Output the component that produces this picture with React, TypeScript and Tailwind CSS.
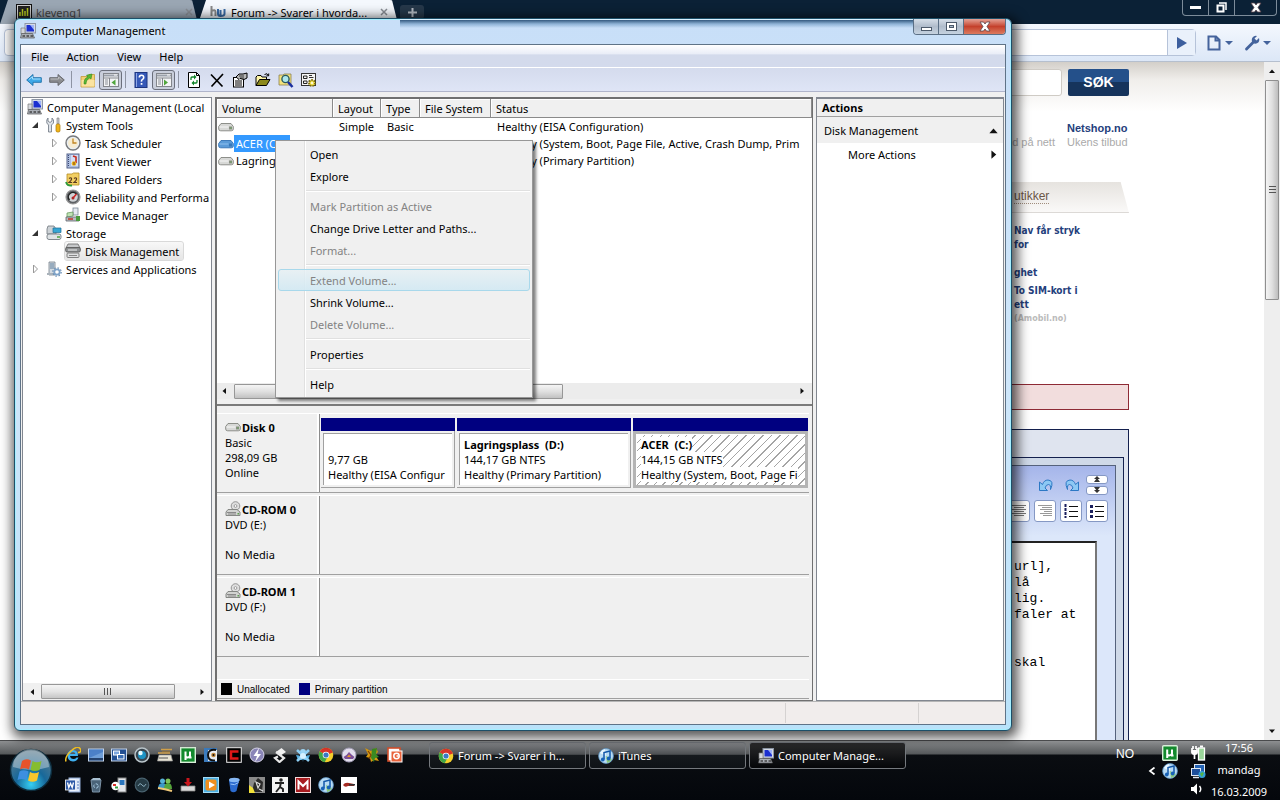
import type { ReactNode } from 'react';
import { clsx } from 'clsx';

type IconProps = { children: ReactNode; size?: number };

function Icon({ children, size = 16 }: IconProps) {
  return (
    <svg width={size} height={size} viewBox="0 0 16 16" className="shrink-0" aria-hidden="true">
      {children}
    </svg>
  );
}

/* ---------- shared icons ---------- */

const ComputerIcon = () => (
  <Icon>
    <rect x="5" y="0.500" width="10.500" height="9.500" fill="#d5dbe6" stroke="#8c95a5" />
    <rect x="6.500" y="2" width="7.500" height="6.500" fill="#1b2fd0" />
    <path d="M10 2h4v5z" fill="#9db2f8" />
    <path d="M1 5h4v6H1z" fill="#d4d7dc" stroke="#777" strokeWidth=".7" />
    <path d="M1.500 10.500h11l2 4.500H.5z" fill="#a9aeb5" stroke="#555" strokeWidth=".7" />
    <path d="M2.500 13h2.500M6.500 13H9M10.500 13H13" stroke="#444" strokeWidth="1.400" />
  </Icon>
);

const ToolsIcon = () => (
  <Icon>
    <path d="M2 1v3l2 1.500 2-1.500V1l1.500 2v3L5.500 8v7h-3V8L.8 6V3z" fill="#dfe3e8" stroke="#6b7580" strokeWidth=".8" />
    <path d="M11 1h2v6h-2z" fill="#c9ccd2" stroke="#777" strokeWidth=".6" />
    <rect x="10" y="7" width="4" height="8" rx="1.500" fill="#f0b418" stroke="#a87508" strokeWidth=".7" />
  </Icon>
);

const ClockIcon = () => (
  <Icon>
    <circle cx="8" cy="8" r="7" fill="#e9eef2" stroke="#77797c" strokeWidth="1.400" />
    <circle cx="8" cy="8" r="5" fill="#f7ecd0" />
    <path d="M8 3.500V8h3.500" stroke="#c08423" strokeWidth="1.300" fill="none" />
  </Icon>
);

const EventIcon = () => (
  <Icon>
    <rect x="2" y="1" width="12" height="14" fill="#aebfe0" stroke="#56648c" />
    <path d="M3.500 2v12" stroke="#3b4772" strokeDasharray="1 1" />
    <rect x="6" y="2" width="7" height="11" fill="#d5def6" />
    <path d="M8 3l3 1v6" stroke="#c62b1d" strokeWidth="1.600" fill="none" />
    <circle cx="9" cy="10.500" r="2.300" fill="#e9b616" />
    <path d="M9 9v3" stroke="#8a3a10" />
  </Icon>
);

const SharedIcon = () => (
  <Icon>
    <path d="M2 3h5l1.500-1H14v12H2z" fill="#f2cf63" stroke="#b48b22" strokeWidth=".8" />
    <path d="M4 7.500q2-1.500 2.500 0T4 11.500h3M9 7.500q2-1.500 2.500 0T9 11.500h3" stroke="#5a3a20" strokeWidth="1.200" fill="none" />
    <path d="M1 11q1 4 6 3.500" stroke="#2c9d3c" strokeWidth="1.800" fill="none" />
  </Icon>
);

const GaugeIcon = () => (
  <Icon>
    <circle cx="8" cy="8" r="7" fill="#5d6064" stroke="#999" strokeWidth="1.200" />
    <circle cx="8" cy="8" r="4.800" fill="#cfd3d6" />
    <path d="M4.500 11a4.500 4.500 0 017-6" stroke="#222" strokeWidth="1.400" fill="none" />
    <path d="M8 9l3.500-4" stroke="#d02020" strokeWidth="1.500" />
    <circle cx="8" cy="9" r="1.500" fill="#b02424" />
  </Icon>
);

const DeviceIcon = () => (
  <Icon>
    <rect x="8" y="1" width="5" height="7" fill="#e4e9f0" stroke="#7b8794" strokeWidth=".8" />
    <path d="M2 6l6-1v4l-6 1z" fill="#bfe3b5" stroke="#5c8f50" strokeWidth=".7" />
    <path d="M1 10h13v4H1z" fill="#b8bcc2" stroke="#5f666d" strokeWidth=".8" />
    <path d="M3 12h5" stroke="#c23326" strokeWidth="1.500" />
    <path d="M11 9h4v5h-4z" fill="#4b9a3d" />
  </Icon>
);

const StorageIcon = () => (
  <Icon>
    <path d="M2 1h6l2 3v5H1V4z" fill="#cdd2d6" stroke="#6e767d" strokeWidth=".8" />
    <path d="M7 3h8v4.500H7z" fill="#36a6d4" stroke="#1e6f95" strokeWidth=".7" />
    <rect x="1" y="9" width="14" height="5.500" rx="2" fill="#dfe3e5" stroke="#747c82" strokeWidth=".9" />
    <path d="M11 12h3" stroke="#4ea33f" strokeWidth="1.500" />
  </Icon>
);

const DiskMgmtIcon = () => (
  <Icon>
    <path d="M3 1h10l2 4H1z" fill="#c6c8ca" stroke="#666" strokeWidth=".8" />
    <rect x="0.600" y="4.500" width="14.800" height="4.500" rx="1.500" fill="#8d9092" stroke="#555" strokeWidth=".8" />
    <path d="M3 7h9" stroke="#eee" />
    <rect x="2" y="10" width="12" height="4.500" rx="1" fill="#e0e1e2" stroke="#666" strokeWidth=".8" />
    <path d="M4 12.500h8" stroke="#888" />
  </Icon>
);

const ServicesIcon = () => (
  <Icon>
    <path d="M3 1h6v13H3z" fill="#d3dae1" stroke="#76808a" strokeWidth=".8" />
    <path d="M4 3h4M4 5h4M4 7h4" stroke="#5d7f9c" />
    <path d="M1 12h7v2H1z" fill="#aab3bb" />
    <circle cx="11" cy="11" r="2.700" fill="#fff" stroke="#7ea3c9" strokeWidth="1.800" />
    <circle cx="11" cy="11" r="4.200" fill="none" stroke="#6a8fb5" strokeWidth="1.200" strokeDasharray="1.500 1.800" />
  </Icon>
);

const DriveIcon = ({ selected = false }: { selected?: boolean }) => (
  <Icon>
    <path d="M3 4.500h10l2.300 3v2.500q0 1.800-2 1.800H2.700q-2 0-2-1.800V7.500z" fill={selected ? '#5b9bd8' : '#d7d8d6'} stroke={selected ? '#3272b4' : '#82847f'} strokeWidth=".9" />
    <path d="M1.500 8h9" stroke={selected ? '#8fc0ee' : '#f7f7f7'} />
    <path d="M11 7.500h3v3h-3z" fill={selected ? '#3878b8' : '#8a9084'} />
    {!selected && <path d="M12.500 8.500h1v1h-1z" fill="#4fae3f" />}
  </Icon>
);

const CdDriveIcon = () => (
  <Icon>
    <circle cx="10.500" cy="5" r="4.300" fill="#dedede" stroke="#8b8b8b" strokeWidth=".9" />
    <circle cx="10.500" cy="5" r="1.400" fill="#fff" stroke="#888" strokeWidth=".8" />
    <path d="M3 8.500h9l3 2.500v3.500H1V11z" fill="#d2d3d1" stroke="#7c7e7a" strokeWidth=".9" />
    <path d="M2 11.500h9M3 13h8" stroke="#777" strokeWidth=".8" />
    <path d="M12.500 12h1.500v1.500h-1.500z" fill="#5ca150" />
  </Icon>
);

const ChromeIcon = () => (
  <Icon>
    <circle cx="8" cy="8" r="7.300" fill="#f4cf2c" />
    <path d="M8 8L1.700 4.400A7.300 7.300 0 0114.900 5.500z" fill="#d8352a" />
    <path d="M8 8L1.700 4.400a7.300 7.300 0 005 10.800L10 9z" fill="#3fa548" />
    <circle cx="8" cy="8" r="3.300" fill="#fff" />
    <circle cx="8" cy="8" r="2.600" fill="#3a78c4" />
  </Icon>
);

const ITunesIcon = () => (
  <Icon>
    <circle cx="8" cy="8" r="7.400" fill="#b9dcf5" stroke="#5d94c4" strokeWidth=".8" />
    <path d="M2 5a7 7 0 015-4l1 7z" fill="#e9f7ff" />
    <path d="M9 15a7 7 0 005-4L8 8z" fill="#8ac77a" />
    <path d="M6 11V4.500l6-1.500v7" stroke="#1257a8" strokeWidth="1.500" fill="none" />
    <circle cx="4.800" cy="11.500" r="1.900" fill="#1762b8" />
    <circle cx="10.700" cy="10.500" r="1.900" fill="#1762b8" />
  </Icon>
);

const MuIcon = () => (
  <Icon>
    <rect x="0.700" y="0.700" width="14.600" height="14.600" rx="1" fill="#138a2d" stroke="#d9efd9" strokeWidth="1.400" />
    <path d="M5.200 13V4.500M5.200 8.500q0 2 2 2t2.800-2v-4M10 8v2.500h1.500" stroke="#fff" strokeWidth="2" fill="none" />
  </Icon>
);

/* ---------- toolbar ---------- */

const BackIcon = () => (
  <Icon>
    <path d="M0.700 8L7 2.500v3.200h8.300v4.600H7v3.200z" fill="#3fa9e8" stroke="#1c6ea8" strokeWidth=".9" />
    <path d="M3 7.500L6.500 4.600V7h8" stroke="#a5ddfa" fill="none" />
  </Icon>
);

const ForwardIcon = () => (
  <Icon>
    <path d="M15.300 8L9 2.500v3.200H.7v4.600H9v3.200z" fill="#8b8c90" stroke="#606165" strokeWidth=".9" />
    <path d="M1.500 7H9.500V5l3 2.500" stroke="#b9babd" fill="none" />
  </Icon>
);

const UpFolderIcon = () => (
  <Icon>
    <path d="M1 4.500h7l1-2h5.500V15H1z" fill="#f3cf74" stroke="#c49a3a" strokeWidth=".8" />
    <path d="M1.500 8h13v6.500h-13z" fill="#fbe3a0" />
    <path d="M4 12c0-4 1-6 4-7L6.500 3.200 12 2l-1 5-1.300-1C7.500 7 6 9 6 12z" fill="#58b837" stroke="#358a1c" strokeWidth=".6" />
  </Icon>
);

const PaneIcon = ({ mirrored = false }: { mirrored?: boolean }) => (
  <Icon>
    <rect x="0.500" y="1.500" width="15" height="13" fill="#f3f4f6" stroke="#83868c" />
    <path d="M1 3.500h14" stroke="#9ba1ab" strokeWidth="2" />
    <path d="M11 3h3" stroke="#fff" />
    <path d="M0.500 6h15M6.500 6v8.500" stroke="#83868c" />
    <path d="M2 8h3M2 10h3M2 12h3" stroke="#8a8f97" />
    {mirrored ? <path d="M8 7.500l4 3-4 3z" fill="#50a53c" /> : <path d="M12.500 7.500l-4 3 4 3z" fill="#50a53c" />}
  </Icon>
);

const HelpIcon = () => (
  <Icon>
    <rect x="2" y="0.500" width="12" height="15" fill="#3558b8" stroke="#1d3580" />
    <path d="M3.500 1v14" stroke="#8fa7e6" />
    <path d="M6.300 5.500q0-2.300 2.200-2.300t2.200 2.200q0 1.300-1.200 2t-1 2.300" stroke="#fff" strokeWidth="1.600" fill="none" />
    <rect x="7.700" y="11" width="1.700" height="1.800" fill="#fff" />
  </Icon>
);

const RefreshIcon = () => (
  <Icon>
    <path d="M2.500.5h8l3 3v12h-11z" fill="#fff" stroke="#000" />
    <path d="M10.500.5v3h3" fill="none" stroke="#000" />
    <path d="M5 8V6q0-1 1-1h3M11 8v2q0 1-1 1H7" stroke="#11852a" strokeWidth="1.300" fill="none" />
    <path d="M8 2.500L10.500 5 8 7.500zM8 8.500L5.500 11 8 13.500z" fill="#11852a" />
  </Icon>
);

const DeleteIcon = () => (
  <Icon>
    <path d="M2 2.500l11.500 12M14 2L2.500 14.500" stroke="#000" strokeWidth="1.700" />
  </Icon>
);

const PropertiesIcon = () => (
  <Icon>
    <rect x="1.500" y="5.500" width="10" height="9.500" fill="#fff" stroke="#000" />
    <path d="M3 9h7M3 11h7M3 13h7" stroke="#000" />
    <path d="M4 5l3-3h4l4-1v5l-3 1.500-4-1-1 1z" fill="#b9b9b9" stroke="#000" />
    <path d="M7 4h5M8 6h4" stroke="#000" strokeWidth=".7" />
  </Icon>
);

const OpenIcon = () => (
  <Icon>
    <path d="M1 13.500V5l1.500-1.500H6L7 5h4.500v2.500" fill="#fff6a8" stroke="#000" />
    <path d="M1 13.500l3.500-6H15l-3.500 6z" fill="#8c8a1c" stroke="#000" />
    <path d="M9.500 2.500q3-2 4 1M13.700 1.500v2.300h-2.300" stroke="#000" fill="none" />
  </Icon>
);

const FindIcon = () => (
  <Icon>
    <path d="M1 3h4l1-1h7v11H1z" fill="#f4e27c" stroke="#8c8250" strokeWidth=".8" />
    <circle cx="7.500" cy="7" r="3.600" fill="#aee7ee" stroke="#2c5c5e" strokeWidth="1.400" />
    <path d="M10 10l4.500 5" stroke="#1a2fa0" strokeWidth="2.600" />
  </Icon>
);

const SettingsIcon = () => (
  <Icon>
    <rect x="0.500" y="1.500" width="14" height="12" fill="#f4f4f4" stroke="#333" />
    <path d="M2.500 4h3.500v2.500H2.500zM2.500 9h3.500v2.500H2.500z" fill="none" stroke="#222" />
    <path d="M8 5.500h4.500M8 3.500h3M7.500 9h2" stroke="#333" />
    <circle cx="11" cy="11" r="3" fill="#f1e04a" stroke="#7c6c08" strokeWidth="1.800" strokeDasharray="1.600 1" />
    <circle cx="11" cy="11" r="1" fill="#fff" />
  </Icon>
);

const ToolSeparator = () => <span className="mx-[3px] h-[17px] w-px bg-[#8e94a3]" />;

type ToolButtonProps = { label: string; pressed?: boolean; children: ReactNode };

function ToolButton({ label, pressed = false, children }: ToolButtonProps) {
  return (
    <button
      type="button"
      aria-label={label}
      className={clsx(
        'flex h-5 w-[23px] items-center justify-center',
        pressed && 'rounded-[3px] border border-[#6b6f7c] bg-[#c9cedb]',
      )}
    >
      {children}
    </button>
  );
}

function Toolbar() {
  return (
    <div className="flex h-[25px] shrink-0 items-center border-t border-b border-t-white border-b-[#b0b5cb] bg-gradient-to-b from-[#d4dbed] to-[#dfe5f6] pl-px">
      <ToolButton label="Back"><BackIcon /></ToolButton>
      <ToolButton label="Forward"><ForwardIcon /></ToolButton>
      <span className="mr-1 ml-[3px] h-[17px] w-px bg-[#8e94a3]" />
      <ToolButton label="Up one level"><UpFolderIcon /></ToolButton>
      <ToolButton label="Show console tree" pressed><PaneIcon /></ToolButton>
      <ToolSeparator />
      <ToolButton label="Help"><HelpIcon /></ToolButton>
      <ToolButton label="Show action pane" pressed><PaneIcon mirrored /></ToolButton>
      <ToolSeparator />
      <ToolButton label="Refresh"><RefreshIcon /></ToolButton>
      <ToolButton label="Delete"><DeleteIcon /></ToolButton>
      <ToolButton label="Properties"><PropertiesIcon /></ToolButton>
      <ToolButton label="Open"><OpenIcon /></ToolButton>
      <ToolButton label="Find"><FindIcon /></ToolButton>
      <ToolButton label="Settings"><SettingsIcon /></ToolButton>
    </div>
  );
}

/* ---------- scroll bar ---------- */

function Arrow({ dir, size = 8 }: { dir: 'left' | 'right' | 'up' | 'down'; size?: number }) {
  const paths = {
    left: 'M6 1v6L2.500 4z',
    right: 'M2.500 1v6L6 4z',
    up: 'M1 6h6L4 2.500z',
    down: 'M1 2.500h6L4 6z',
  };
  return (
    <svg width={size} height={size} viewBox="0 0 8 8" aria-hidden="true">
      <path d={paths[dir]} fill="#111" />
    </svg>
  );
}

/* ---------- console tree ---------- */

type TreeItem = { label: string; level: 0 | 1 | 2; icon: ReactNode; state?: 'open' | 'closed'; selected?: boolean };

const TREE: TreeItem[] = [
  { label: 'Computer Management (Local', level: 0, icon: <ComputerIcon /> },
  { label: 'System Tools', level: 1, icon: <ToolsIcon />, state: 'open' },
  { label: 'Task Scheduler', level: 2, icon: <ClockIcon />, state: 'closed' },
  { label: 'Event Viewer', level: 2, icon: <EventIcon />, state: 'closed' },
  { label: 'Shared Folders', level: 2, icon: <SharedIcon />, state: 'closed' },
  { label: 'Reliability and Performa', level: 2, icon: <GaugeIcon />, state: 'closed' },
  { label: 'Device Manager', level: 2, icon: <DeviceIcon /> },
  { label: 'Storage', level: 1, icon: <StorageIcon />, state: 'open' },
  { label: 'Disk Management', level: 2, icon: <DiskMgmtIcon />, selected: true },
  { label: 'Services and Applications', level: 1, icon: <ServicesIcon />, state: 'closed' },
];

const INDENT = { 0: 'pl-1', 1: 'pl-[7px]', 2: 'pl-[26px]' };

function ConsoleTree() {
  return (
    <nav className="flex w-[190px] shrink-0 flex-col border border-[#828790] bg-white" aria-label="Console tree">
      <ul className="flex-1 overflow-hidden">
        {TREE.map((item) => (
          <li key={item.label} className={clsx('flex h-[18px] items-center whitespace-nowrap', INDENT[item.level])}>
            {item.level > 0 && (
              <svg width="16" height="10" viewBox="0 0 16 10" className="shrink-0" aria-hidden="true">
                {item.state === 'open' && <path d="M8 2v6H2z" fill="#333" />}
                {item.state === 'closed' && <path d="M3.500 1v8l4-4z" fill="#fff" stroke="#999" />}
              </svg>
            )}
            <span
              className={clsx(
                'flex h-[18px] items-center gap-1',
                item.selected && 'rounded-[2px] bg-gradient-to-b from-[#f8f8f8] to-[#e5e5e5] pr-1 outline outline-[#d9d9d9]',
              )}
            >
              {item.icon}
              {item.label}
            </span>
          </li>
        ))}
      </ul>
      <div className="flex h-[17px] items-center bg-[#f0f0f0]">
        <span className="flex w-[18px] justify-center"><Arrow dir="left" /></span>
        <div className="flex flex-1 items-center">
          <div className="flex h-[15px] w-[134px] items-center justify-center gap-px rounded-[1px] border border-[#979797] bg-gradient-to-b from-[#f5f5f5] via-[#e4e4e4] to-[#c6c6c6]">
            <span className="h-[7px] w-[8px] bg-[repeating-linear-gradient(90deg,#555_0_1px,transparent_1px_3px)]" />
          </div>
        </div>
        <span className="flex w-[18px] justify-center"><Arrow dir="right" /></span>
      </div>
    </nav>
  );
}

/* ---------- volumes ---------- */

const VOLUMES = [
  { name: '', fs: '', status: 'Healthy (EISA Configuration)', selected: false },
  { name: 'ACER (C:)', fs: 'NTFS', status: 'Healthy (System, Boot, Page File, Active, Crash Dump, Prim', selected: true },
  { name: 'Lagring', fs: 'NTFS', status: 'Healthy (Primary Partition)', selected: false },
];

const TH = 'h-[19px] border-r border-b border-[#8a8a8a] bg-[#f0f0f0] px-[5px] text-left font-normal shadow-[inset_1px_1px_0_#fff]';
const TD = 'h-[17px] overflow-hidden py-0 pr-0 pl-[6px]';

function VolumeTable() {
  return (
    <section className="flex h-[307px] shrink-0 flex-col border-b-2 border-b-[#7b7b7b]">
      <div className="flex-1 overflow-hidden bg-white">
        <table className="w-full table-fixed border-separate border-spacing-0 whitespace-nowrap">
          <colgroup>
            <col className="w-[116px]" />
            <col className="w-[48px]" />
            <col className="w-[39px]" />
            <col className="w-[71px]" />
            <col />
          </colgroup>
          <thead>
            <tr>
              <th className={TH}>Volume</th>
              <th className={TH}>Layout</th>
              <th className={TH}>Type</th>
              <th className={TH}>File System</th>
              <th className={TH}>Status</th>
            </tr>
          </thead>
          <tbody>
            {VOLUMES.map((v) => (
              <tr key={v.status}>
                <td className="h-[17px] overflow-hidden p-0">
                  <span className="flex h-[17px] items-center pl-px">
                    <DriveIcon selected={v.selected} />
                    <span className={clsx('h-[17px] pr-2 pl-[2px] leading-[17px]', v.selected && 'bg-[#3399ff] text-white')}>{v.name}</span>
                  </span>
                </td>
                <td className={TD}>Simple</td>
                <td className={TD}>Basic</td>
                <td className={TD}>{v.fs}</td>
                <td className={TD}>{v.status}</td>
              </tr>
            ))}
          </tbody>
        </table>
      </div>
      <div className="mb-[5px] flex h-[16px] items-center bg-[#ececec]">
        <span className="flex w-[17px] pl-[3px]"><Arrow dir="left" /></span>
        <div className="flex-1">
          <div className="h-[15px] w-[329px] rounded-[1px] border border-[#979797] bg-gradient-to-b from-[#f5f5f5] via-[#e0e0e0] to-[#c2c2c2]" />
        </div>
        <span className="flex w-[17px] pl-[3px]"><Arrow dir="right" /></span>
      </div>
    </section>
  );
}

/* ---------- graphical view ---------- */

type PartitionProps = { name?: string; size: string; status: string; className: string; selected?: boolean };

function Partition({ name, size, status, className, selected = false }: PartitionProps) {
  const lineBg = clsx(selected && 'bg-white');
  return (
    <div className={clsx('flex min-w-0 flex-col', className)}>
      <div className="h-[13px] bg-[#000080]" />
      <div className={clsx('flex-1', selected ? 'bg-[#b4b4b4] p-[3px]' : 'border-r border-b border-[#a0a0a0] p-[2px]')}>
        <div
          className={clsx(
            'h-full overflow-hidden border-t border-l pl-1 leading-[15px] whitespace-pre',
            selected
              ? 'border-white bg-white bg-[repeating-linear-gradient(135deg,transparent_0_5px,#a5a5a5_5px_6px)] pt-[2px]'
              : 'border-[#a0a0a0] bg-white pt-[3px]',
          )}
        >
          <div className="h-[15px] font-bold"><span className={lineBg}>{name}</span></div>
          <div><span className={lineBg}>{size}</span></div>
          <div><span className={lineBg}>{status}</span></div>
        </div>
      </div>
    </div>
  );
}

type DiskRowProps = { icon: ReactNode; name: string; lines: string[]; children?: ReactNode };

function DiskRow({ icon, name, lines, children }: DiskRowProps) {
  return (
    <div className="mb-[2px] flex h-[80px] border-t border-b border-t-white border-b-[#a0a0a0]">
      <div className="w-[103px] shrink-0 border-r border-[#8c8c8c] pt-[6px] pl-2 leading-[15px] shadow-[inset_-2px_0_0_#fff]">
        <div className="flex h-[15px] items-end font-bold">{icon}<span className="pl-px">{name}</span></div>
        {lines.map((line, i) => (
          <div key={i} className="h-[15px]">{line}</div>
        ))}
      </div>
      <div className="flex min-w-0 flex-1 gap-[2px] px-px pt-1 pb-1">{children}</div>
    </div>
  );
}

function DiskView() {
  return (
    <section className="flex min-h-0 flex-1 flex-col pt-[7px] pr-[3px]">
      <DiskRow icon={<DriveIcon />} name="Disk 0" lines={['Basic', '298,09 GB', 'Online']}>
        <Partition className="flex-[134_1_0%]" size="9,77 GB" status="Healthy (EISA Configur" />
        <Partition className="flex-[174_1_0%]" name="Lagringsplass  (D:)" size="144,17 GB NTFS" status="Healthy (Primary Partition)" />
        <Partition className="flex-[175_1_0%]" name="ACER  (C:)" size="144,15 GB NTFS" status="Healthy (System, Boot, Page Fi" selected />
      </DiskRow>
      <DiskRow icon={<CdDriveIcon />} name="CD-ROM 0" lines={['DVD (E:)', '', 'No Media']} />
      <DiskRow icon={<CdDriveIcon />} name="CD-ROM 1" lines={['DVD (F:)', '', 'No Media']} />
      <div className="mt-auto mb-px flex h-[20px] shrink-0 items-center border-t border-b border-t-white border-b-[#a0a0a0] pl-1 font-['Liberation_Sans',sans-serif] text-[10px]">
        <span className="mr-[5px] h-3 w-[11px] bg-black" />
        Unallocated
        <span className="mr-[5px] ml-[9px] h-3 w-[11px] bg-[#000080]" />
        Primary partition
      </div>
    </section>
  );
}

/* ---------- context menu ---------- */

type MenuEntry = { label: string; disabled?: boolean; hot?: boolean };

const MENU_GROUPS: MenuEntry[][] = [
  [{ label: 'Open' }, { label: 'Explore' }],
  [{ label: 'Mark Partition as Active', disabled: true }, { label: 'Change Drive Letter and Paths...' }, { label: 'Format...', disabled: true }],
  [{ label: 'Extend Volume...', disabled: true, hot: true }, { label: 'Shrink Volume...' }, { label: 'Delete Volume...', disabled: true }],
  [{ label: 'Properties' }],
  [{ label: 'Help' }],
];

function ContextMenu() {
  return (
    <div
      role="menu"
      className="absolute top-[41px] left-[58px] z-10 w-[258px] border border-[#979797] bg-[#f0f0f0] bg-[linear-gradient(90deg,transparent_28px,#e0e0e0_28px_29px,#fff_29px_30px,transparent_30px)] p-[2px] shadow-[3px_3px_3px_rgba(0,0,0,0.5)]"
    >
      {MENU_GROUPS.map((group, i) => (
        <div key={i} role="group">
          {i > 0 && <div className="ml-7 flex h-2 items-center"><span className="h-[2px] w-full border-t border-b border-t-[#e0e0e0] border-b-white" /></div>}
          {group.map((entry) => (
            <button
              key={entry.label}
              type="button"
              role="menuitem"
              disabled={entry.disabled}
              className={clsx(
                'flex h-[22px] w-full items-center border pl-[31px] text-left',
                entry.disabled ? 'text-[#838383]' : 'text-black',
                entry.hot ? 'rounded-[3px] border-[#a8d8eb] bg-gradient-to-b from-[#e6f0f4]/80 to-[#d2e9f3]/90' : 'border-transparent',
              )}
            >
              {entry.label}
            </button>
          ))}
        </div>
      ))}
    </div>
  );
}

/* ---------- actions pane ---------- */

function ActionsPane() {
  return (
    <aside className="flex w-[188px] shrink-0 flex-col border-t-2 border-r border-b border-l border-[#828790] bg-white">
      <h2 className="flex h-[18px] items-center border-b border-[#a0a0a0] bg-[#f0f0f0] pl-[5px] font-bold">Actions</h2>
      <button type="button" className="flex h-[26px] items-center justify-between bg-[#f0f0f0] pr-1 pl-[7px]">
        Disk Management <Arrow dir="up" size={11} />
      </button>
      <button type="button" className="flex h-[22px] items-center justify-between pr-1 pl-[31px]">
        More Actions <Arrow dir="right" size={11} />
      </button>
    </aside>
  );
}

/* ---------- management window ---------- */

const CloseGlyph = () => (
  <svg width="14" height="11" viewBox="0 0 14 11" aria-hidden="true">
    <path d="M2 1h3.500L7 3l1.500-2H12L9 5.500l3 4.500H8.500L7 8l-1.500 2H2l3-4.500z" fill="#fff" stroke="#58424a" strokeWidth=".8" />
  </svg>
);

const CAPTION_BUTTON = 'flex w-[25px] items-center justify-center border-r border-[#5b6f85] bg-gradient-to-b from-[#d6dee8] via-[#b0bccb] to-[#c5d2e0]';

function ManagementWindow() {
  return (
    <section
      aria-label="Computer Management"
      className="absolute top-[18px] right-[268px] bottom-[69px] left-[14px] flex flex-col rounded-[6px] border border-[#1d4f68] bg-[#bfe0f8] bg-gradient-to-b from-[#c8dff8] via-[#cfe6fa] to-[#b9e2fa] px-[5px] pb-[5px] shadow-[2px_3px_12px_4px_rgba(0,0,0,0.65),inset_0_0_0_1px_#a5efff]"
    >
      <header className="flex h-[25px] shrink-0 items-start justify-between bg-[linear-gradient(#d8f0ff_0_1px,#34597f_1px,#8fb3d6_5px,transparent_9px)] bg-[position:380px_0] bg-no-repeat">
        <div className="flex h-full items-center gap-[5px] pb-[2px]">
          <ComputerIcon />
          <h1 className="[text-shadow:0_0_6px_#fff]">Computer Management</h1>
        </div>
        <div className="flex h-[16px] overflow-hidden rounded-b-[4px] border border-t-0 border-[#5b6f85]">
          <button type="button" aria-label="Minimize" className={CAPTION_BUTTON}>
            <span className="mt-1 h-[4px] w-[11px] border border-[#4d5a6b] bg-white" />
          </button>
          <button type="button" aria-label="Maximize" className={CAPTION_BUTTON}>
            <span className="h-[9px] w-[11px] border border-[#4d5a6b] bg-white p-[2px]">
              <span className="block h-full border border-[#4d5a6b] bg-[#a9bacb]" />
            </span>
          </button>
          <button type="button" aria-label="Close" className="flex w-[41px] items-center justify-center bg-gradient-to-b from-[#e3a196] via-[#c4402c] to-[#dc7a5f]">
            <CloseGlyph />
          </button>
        </div>
      </header>
      <div className="flex min-h-0 flex-1 flex-col border border-[#5f7387] bg-[#f0f0f0]">
        <nav className="flex h-[22px] shrink-0 items-center bg-[linear-gradient(#ffffff,#e9edf7_40%,#d3daeb_45%,#d3daec)] pl-px">
          <button type="button" className="px-[9px]">File</button>
          <button type="button" className="px-[9px]">Action</button>
          <button type="button" className="px-[9px]">View</button>
          <button type="button" className="px-[9px]">Help</button>
        </nav>
        <Toolbar />
        <div className="flex min-h-0 flex-1 gap-[3px] px-px pt-[5px]">
          <ConsoleTree />
          <main className="relative flex min-w-0 flex-1 flex-col border-t-2 border-r border-b border-l-2 border-[#707070]">
            <VolumeTable />
            <DiskView />
            <ContextMenu />
          </main>
          <ActionsPane />
        </div>
        <footer className="flex h-[23px] shrink-0 justify-end border-t border-[#b5b5b5] bg-[#f1edec] py-px">
          <span className="w-[133px] border-l border-[#d5d2d1]" />
          <span className="w-[87px] border-l border-[#d5d2d1]" />
        </footer>
      </div>
    </section>
  );
}

/* ---------- browser behind ---------- */

const TabClose = () => (
  <svg width="8" height="8" viewBox="0 0 8 8" aria-hidden="true">
    <path d="M1 1l6 6M7 1L1 7" stroke="#8a8f96" strokeWidth="1.500" />
  </svg>
);

function BrowserTabs() {
  return (
    <header className="flex h-6 shrink-0 justify-between bg-[#0b2136]">
      <div className="flex items-start">
        <div className="flex h-6 w-[198px] items-center gap-1 rounded-t-[8px] bg-[#9aa6b3] pr-[5px] pl-4 text-[#444] [clip-path:polygon(4%_0,97%_0,100%_100%,0_100%)]">
          <Icon>
            <rect x="0.500" y="0.500" width="15" height="15" fill="#ccc" stroke="#111" />
            <rect x="2" y="2" width="12" height="12" fill="#222" />
            <path d="M4 12V8M6.500 12V5M9 12V7M11.500 12V4" stroke="#b4c81e" strokeWidth="1.500" />
          </Icon>
          <span className="flex-1">kleveng1</span>
          <TabClose />
        </div>
        <div className="flex h-6 w-[200px] items-center gap-[5px] rounded-t-[8px] bg-[#f4f8fd] pr-[10px] pl-3 [clip-path:polygon(4%_0,97%_0,100%_100%,0_100%)]">
          <Icon>
            <path d="M1.500 2v10M1.500 7q4-2 4 1v4" stroke="#888" strokeWidth="2" fill="none" />
            <path d="M8 5v5q0 2 2.500 2V6M10.500 12q4 0 4-2V5" stroke="#3a6ca8" strokeWidth="2" fill="none" />
          </Icon>
          <span className="flex-1 whitespace-nowrap">Forum -&gt; Svarer i hvorda...</span>
          <TabClose />
        </div>
        <button type="button" aria-label="New tab" className="mt-[5px] ml-[2px] flex h-[14px] w-[24px] items-center justify-center rounded-[3px] bg-[#26384a]">
          <svg width="9" height="9" viewBox="0 0 9 9"><path d="M4.500 0v9M0 4.500h9" stroke="#b5bcc4" strokeWidth="2" /></svg>
        </button>
      </div>
      <div className="mr-[3px] flex h-4 overflow-hidden rounded-b-[4px] border border-t-0 border-[#7d8c9a]">
        <button type="button" aria-label="Minimize browser" className="flex w-[26px] items-center justify-center border-r border-[#7d8c9a]">
          <span className="h-[3px] w-[11px] bg-white" />
        </button>
        <button type="button" aria-label="Restore browser" className="flex w-[26px] items-center justify-center border-r border-[#7d8c9a]">
          <svg width="11" height="11" viewBox="0 0 11 11"><path d="M3 1h7v7" stroke="#fff" strokeWidth="1.500" fill="none" /><path d="M1.500 3.500h6v6h-6z" stroke="#fff" strokeWidth="2" fill="none" /></svg>
        </button>
        <button type="button" aria-label="Close browser" className="flex w-[41px] items-center justify-center">
          <CloseGlyph />
        </button>
      </div>
    </header>
  );
}

function BrowserToolbar() {
  return (
    <div className="flex h-[38px] shrink-0 items-center border-b border-[#b5bfce] bg-gradient-to-b from-[#f4f8fe] to-[#dce7f7] pr-[9px] pl-1">
      <div className="flex h-[27px] flex-1 rounded-[4px] border border-[#b6c3d9] bg-white">
        <input aria-label="Address" className="min-w-0 flex-1 bg-transparent" />
        <button type="button" aria-label="Go" className="flex w-[28px] items-center justify-center border-l border-[#b6c3d9] bg-[#eaf1fb]">
          <svg width="10" height="12" viewBox="0 0 10 12"><path d="M0 0l10 6-10 6z" fill="#3d5f9e" /></svg>
        </button>
      </div>
      <button type="button" aria-label="Page" className="ml-[11px] flex w-[27px] items-center gap-1">
        <svg width="14" height="16" viewBox="0 0 14 16"><path d="M1.500 1.500h7.500l3.500 3.500v9.500h-11zM8.500 2v3.500h4" fill="none" stroke="#44639c" strokeWidth="2" /></svg>
        <svg width="8" height="4" viewBox="0 0 8 4"><path d="M0 0h8L4 4z" fill="#44639c" /></svg>
      </button>
      <button type="button" aria-label="Tools" className="ml-[10px] flex items-center gap-[3px]">
        <svg width="16" height="16" viewBox="0 0 16 16">
          <path d="M1.500 13L8 6.500q-1-3.500 2-5.300Q11.500.3 13 1l-2.500 2.500 2 2L15 3q1 3.500-1.500 5-1.700 1-3.500.5L3.500 15Q2.500 16 1.500 15t0-2z" fill="#44639c" />
        </svg>
        <svg width="8" height="4" viewBox="0 0 8 4"><path d="M0 0h8L4 4z" fill="#44639c" /></svg>
      </button>
    </div>
  );
}

const EDITOR_BUTTON = 'flex h-[22px] w-[22px] items-center justify-center rounded-[3px] border border-[#8598c4] bg-white';
const SIZE_BUTTON = 'flex h-[9px] w-[22px] items-center justify-center rounded-[3px] border border-[#8598c4] bg-white';

function Editor() {
  return (
    <div className="flex min-h-0 flex-1 flex-col border-t border-r border-[#14204e] bg-[#dfe4ef] pt-[27px] pr-[4px]">
      <div className="flex min-h-0 flex-1 flex-col border-t border-r border-[#14204e] bg-[#cfd9e8] pt-[7px] pr-[7px]">
        <div className="flex min-h-0 flex-1 flex-col border-t border-r border-[#55627c] bg-[#dce7fa] bg-[linear-gradient(#a5b5ea,#dce7fa_70px)] pr-[7px]">
          <div className="flex h-[34px] items-center justify-end gap-[10px] pt-[3px]">
            <button type="button" aria-label="Undo">
              <Icon><path d="M1.500 5v8.500h8L7 11q1-3.500 3.500-3.500T12.500 12.500q4-9-2.500-9.500-4 0-5.500 4.500z" fill="#8cc8f4" stroke="#2c78c4" /></Icon>
            </button>
            <button type="button" aria-label="Redo">
              <Icon><path d="M14.500 5v8.500h-8L9 11Q8 7.500 5.500 7.500T3.500 12.500Q-.5 3.500 6 3q4 0 5.500 4.500z" fill="#8cc8f4" stroke="#2c78c4" /></Icon>
            </button>
            <div className="-ml-1 flex flex-col gap-[2px]">
              <button type="button" aria-label="Shrink editor" className={SIZE_BUTTON}>
                <svg width="6" height="6" viewBox="0 0 6 6"><path d="M3 0l3 3H0zM3 2l3 4H0z" fill="#333" /></svg>
              </button>
              <button type="button" aria-label="Grow editor" className={SIZE_BUTTON}>
                <svg width="6" height="6" viewBox="0 0 6 6"><path d="M3 6l3-3H0zM3 4l3-4H0z" fill="#333" /></svg>
              </button>
            </div>
          </div>
          <div className="flex h-[41px] items-start justify-end gap-[4px]">
            <button type="button" aria-label="Align center" className={EDITOR_BUTTON}>
              <Icon><path d="M1 2.500h14M3 4.500h10M1 6.500h14M3 8.500h10M1 10.500h14M3 12.500h10" stroke="#777" /></Icon>
            </button>
            <button type="button" aria-label="Align right" className={EDITOR_BUTTON}>
              <Icon><path d="M1 2.500h14M5 4.500h10M3 6.500h12M7 8.500h8M3 10.500h12M6 12.500h9" stroke="#999" /></Icon>
            </button>
            <button type="button" aria-label="Numbered list" className={EDITOR_BUTTON}>
              <Icon><path d="M6 3.500h9M6 8.500h9M6 13.500h9" stroke="#111" /><path d="M2.500 1v14" stroke="#1a1f5c" strokeWidth="2" strokeDasharray="3 1" /></Icon>
            </button>
            <button type="button" aria-label="Bullet list" className={EDITOR_BUTTON}>
              <Icon><path d="M6 3.500h9M6 8.500h9M6 13.500h9" stroke="#111" /><path d="M1 2h3v3H1zM1 7h3v3H1zM1 12h3v3H1z" fill="#1a1f5c" /></Icon>
            </button>
          </div>
          <textarea
            aria-label="Reply"
            className="mr-[11px] min-h-0 flex-1 resize-none overflow-hidden border-t-2 border-r-2 border-t-[#222] border-r-[#777] bg-white pt-4 pl-[24px] font-['Liberation_Mono',monospace] text-[13px] leading-[16px] text-black"
            defaultValue={'url],\nlå\nlig.\nfaler at\n\n\nskal'}
          />
        </div>
      </div>
    </div>
  );
}

const NEWS_LINK = 'block text-[10px] leading-[14px] font-bold text-[#24407c]';

function ForumPage() {
  return (
    <div className="flex min-h-0 flex-1 bg-white">
      <div className="flex min-w-0 flex-1 bg-[linear-gradient(#d3cfc9,#f0eeeb_18px,#fff_50px)]">
        <div className="mr-[135px] ml-auto flex w-[139px] flex-col font-['Liberation_Sans',sans-serif]">
          <form className="flex h-[34px] shrink-0 items-end gap-[6px]">
            <input aria-label="Search" className="h-[27px] min-w-0 flex-1 rounded-[3px] border border-[#cfcbc5] bg-white" />
            <button type="button" className="h-[27px] w-[61px] rounded-[2px] bg-[linear-gradient(#24508a_50%,#16345c_50%)] text-[14px] font-bold text-white">SØK</button>
          </form>
          <div className="mt-[25px] flex shrink-0 justify-end text-[11px] leading-[14px]">
            <p className="pt-[14px] text-[#aaa]">d på nett</p>
            <p className="ml-3 w-[62px] whitespace-nowrap text-[#aaa]">
              <a href="#netshop" className="block font-bold text-[#24407c]">Netshop.no</a>
              Ukens tilbud
            </p>
          </div>
          <div className="mt-[33px] h-[31px] shrink-0 border-b border-[#dcd9d6] bg-gradient-to-b from-[#e6e3df] to-[#faf9f8] pt-[7px] pl-[24px] text-[12px] text-[#6b5747] [clip-path:polygon(0_0,94%_0,100%_100%,0_100%)]">
            <a href="#butikker" className="border-b border-dotted border-[#a08c7c]">utikker</a>
          </div>
          <div className="mt-[11px] h-[160px] shrink-0 pl-[24px] font-['DejaVu_Sans_Condensed','DejaVu_Sans',sans-serif] whitespace-nowrap">
            <a href="#nav" className={NEWS_LINK}>
              Nav får stryk<br />for<br /><br />ghet
            </a>
            <a href="#sim" className={clsx(NEWS_LINK, 'mt-1')}>To SIM-kort i<br />ett</a>
            <p className="font-['DejaVu_Sans',sans-serif] text-[8px] leading-[14px] font-bold text-[#bbb]">(Amobil.no)</p>
          </div>
          <div className="mb-[19px] h-[26px] shrink-0 border border-[#8e2a35] bg-[#f2dddd]" />
          <Editor />
        </div>
      </div>
      <div className="flex w-4 shrink-0 flex-col items-center bg-[#eeeeee]">
        <span className="flex h-[18px] items-center"><Arrow dir="up" /></span>
        <div className="flex h-[220px] w-[14px] items-center justify-center rounded-[1px] border border-[#8f8f8f] bg-gradient-to-r from-[#f4f4f4] via-[#e0e0e0] to-[#bdbdbd]">
          <span className="h-[8px] w-[7px] bg-[repeating-linear-gradient(#555_0_1px,transparent_1px_3px)]" />
        </div>
        <span className="mt-auto flex h-[18px] items-center"><Arrow dir="down" /></span>
      </div>
    </div>
  );
}

/* ---------- taskbar ---------- */

const QUICK_LAUNCH: ReactNode[] = [
  <><path d="M13 9H5q.5 3 3.500 3 2 0 3-1.500h2Q12 14.500 8 14.500 2.500 14 2.500 8.500T8 3q5 0 5 6zM5 7h5.500Q10 5 8 5T5 7z" fill="#3fb0f0" /><path d="M1 14.500Q-.5 10 6 4t9-2.500-2 4" fill="none" stroke="#f2c021" strokeWidth="1.500" /></>,
  <><rect x="0.500" y="2" width="15" height="12" fill="#6f9ed8" stroke="#c7d7ee" /><path d="M1 11h14v2.500H1z" fill="#25426e" /><path d="M1 11V2.500h14V5z" fill="#4c80c8" /></>,
  <><rect x="0.500" y="2" width="15" height="12" fill="#234f92" stroke="#c7d7ee" /><rect x="2.500" y="4" width="6" height="4" fill="#7ba5de" stroke="#fff" /><rect x="6.500" y="7.500" width="6.500" height="4.500" fill="#3d6fb4" stroke="#fff" /></>,
  <><circle cx="8" cy="8" r="7" fill="#3a4750" stroke="#bcc7cd" strokeWidth="1.500" /><circle cx="8" cy="8" r="4" fill="#1d93c4" /><circle cx="6.500" cy="6" r="2.200" fill="#e8fbff" /></>,
  <><path d="M2 8h12l1.500 6H.5z" fill="#e8e4d4" stroke="#999" strokeWidth=".7" /><path d="M4 2.500h11M1 6h12" stroke="#d2a14b" strokeWidth="1.500" /><path d="M5 4.500h8" stroke="#8a7040" /><path d="M2 11h9" stroke="#555" /></>,
  <><rect x="0.700" y="0.700" width="14.600" height="14.600" fill="#138a2d" stroke="#d9efd9" strokeWidth="1.400" /><path d="M5.500 13V4.500M5.500 8.500q0 2 2 2t2.500-2v-4M10 8v2.500h1.500" stroke="#fff" strokeWidth="2" fill="none" /></>,
  <><path d="M1 1h13v14H1z" fill="#3c7cbe" /><path d="M5 3h9v11H5z" fill="#e9edf2" /><path d="M13 3Q5 2 5 8t7 5.500" stroke="#111" strokeWidth="2" fill="none" /><circle cx="10.500" cy="8" r="2.300" fill="#c48a3d" /><circle cx="10.500" cy="8" r="1" fill="#111" /></>,
  <><rect x="0.700" y="0.700" width="14.600" height="14.600" fill="#000" stroke="#eee" /><path d="M12.500 4.500H5v7h7.500" stroke="#e01818" strokeWidth="2.500" fill="none" /></>,
  <><circle cx="8" cy="8" r="7" fill="#8a85b8" stroke="#d8d6ea" /><path d="M10 1L4.500 9H8l-2 6 6-8H8.500z" fill="#fff" /></>,
  <><path d="M9.500 1L14 5 8.500 8.500 4 5z" fill="#f2f2f2" /><path d="M4 5l8 6-4.500 4L3 11l3-1.500" fill="none" stroke="#e8e8e8" strokeWidth="2.200" /></>,
  <><circle cx="8" cy="5" r="3" fill="#9fd6f4" /><path d="M1 8q7 0 7 7 0-7 7-7l-2 5H3z" fill="#58b0e0" /><path d="M2 3l12 11M14 3L2 14" stroke="#8fd0f5" strokeWidth="2.600" /><circle cx="8" cy="9" r="3" fill="#d6f1ff" /></>,
  <><circle cx="8" cy="8" r="7.300" fill="#f4cf2c" /><path d="M8 8L1.700 4.400A7.300 7.300 0 0114.900 5.500z" fill="#d8352a" /><path d="M8 8L1.700 4.400a7.300 7.300 0 005 10.800L10 9z" fill="#3fa548" /><circle cx="8" cy="8" r="3.300" fill="#fff" /><circle cx="8" cy="8" r="2.600" fill="#3a78c4" /></>,
  <><circle cx="8" cy="8" r="7" fill="#e4e0ee" stroke="#a49fb8" /><path d="M2.500 10l3-2 2.500-3 3 3 2.500 2-1.500 2h-8z" fill="#7b4f96" /><path d="M6 10l2-2.500 2 2.500z" fill="#e69a2a" /></>,
  <><path d="M1 1l6 3 5-3 2 4-3 3 4 6-5-1-3 2-1-4-4-1 2-3z" fill="#d6990f" /><path d="M8 2l5-1-1 6 3 3-4 1-1 4-3-4z" fill="#3a8a22" /><path d="M4 4l3 4-2 4" stroke="#7a3c08" strokeWidth="1.200" fill="none" /></>,
  <><rect x="1" y="1" width="12" height="13" fill="#fff" stroke="#d5502c" strokeWidth="1.600" /><rect x="4" y="4" width="11" height="11" fill="#e9623a" stroke="#fff" /><circle cx="9.500" cy="9" r="2.700" fill="none" stroke="#fff" strokeWidth="1.500" /><path d="M9.500 9h2" stroke="#fff" strokeWidth="1.500" /></>,
  <><rect x="4" y="1" width="11" height="14" fill="#dfe9f8" stroke="#8fa9d4" /><rect x="0.500" y="3" width="10" height="10" fill="#2c58a6" stroke="#fff" strokeWidth=".8" /><path d="M2.500 5.500l1.300 5 1.700-4 1.700 4 1.300-5" stroke="#fff" strokeWidth="1.300" fill="none" /><path d="M12 5h2M12 8h2M12 11h2" stroke="#5b7fbd" /></>,
  <><path d="M3 3h10l-1.500 12h-7z" fill="#4a6378" stroke="#7d94a8" /><path d="M3 3l2-2h7l1 2z" fill="#a9c0d2" /><circle cx="8" cy="9" r="2.200" fill="none" stroke="#a9cbe4" strokeDasharray="3 1.500" /></>,
  <><rect x="7" y="1" width="8" height="14" fill="#e3e6ea" stroke="#888" /><rect x="8.500" y="3" width="5" height="5" fill="#2a75bd" /><circle cx="4.500" cy="9" r="4.200" fill="#fff" /><path d="M2 7h3v2H2z" fill="#d8302a" /><path d="M4 9.500h3v2H4z" fill="#2f9c41" /></>,
  <><circle cx="8" cy="8" r="6.800" fill="#263b45" stroke="#49626f" strokeWidth="1.200" /><path d="M4 9q2-4 4-1t4-1" stroke="#87a9ba" fill="none" /></>,
  <><circle cx="5.500" cy="4" r="2.500" fill="#57b2d8" /><circle cx="11" cy="4" r="2.500" fill="#7ec35a" /><path d="M1 12q0-6 4.500-6T10 12z" fill="#3d97c8" /><path d="M7 12q0-6 4-6t4 6z" fill="#56a63b" /><path d="M1 11q7 1 14 3" stroke="#f0c878" strokeWidth="2.200" /></>,
  <><path d="M1 9h14v5H1z" fill="#d9d9d9" stroke="#888" strokeWidth=".8" /><path d="M6.500 1h3v4H12l-4 4.500L4 5h2.500z" fill="#c9161c" /></>,
  <><rect x="0.500" y="0.500" width="15" height="15" fill="#4db0e4" stroke="#a4dcf6" /><rect x="2.500" y="2.500" width="11" height="11" rx="2" fill="#ef8f1f" /><path d="M6 4.500l6 3.500-6 3.500z" fill="#fff" /></>,
  <><path d="M3 3.500l10.500-1.500-3 12q-3 2.500-6 0z" fill="#2b6bd0" /><ellipse cx="8.300" cy="3" rx="5.300" ry="2.200" fill="#86b8f4" /><path d="M4.500 7q4 2 8-1.500" stroke="#9cc7fa" fill="none" /></>,
  <><rect width="16" height="16" fill="#8a8a8a" /><path d="M3 15L5 6l4-5 5 4-1 10z" fill="#2a2a2a" /><path d="M7 5l4 2-2 4zM10 12l4 2" stroke="#ddd" strokeWidth="1.200" fill="none" /><path d="M0 8l4 3 2 5H0z" fill="#f2e13a" /></>,
  <><rect width="16" height="16" fill="#f4f4f4" /><circle cx="9" cy="3" r="1.800" fill="#222" /><path d="M3 6h9M9 5l-1 5 3 2v3M8 10l-4 5" stroke="#222" strokeWidth="1.900" fill="none" /></>,
  <><rect x="0.500" y="0.500" width="15" height="15" fill="#a81c20" stroke="#f1dcdc" /><path d="M3.500 12.500V4.500L8 9l4.500-4.500v8" stroke="#fff" strokeWidth="2" fill="none" /></>,
  <><circle cx="8" cy="8" r="7.400" fill="#b9dcf5" stroke="#5d94c4" strokeWidth=".8" /><path d="M9 15a7 7 0 005-4L8 8z" fill="#8ac77a" /><path d="M6 11V4.500l6-1.500v7" stroke="#1257a8" strokeWidth="1.500" fill="none" /><circle cx="4.800" cy="11.500" r="1.900" fill="#1762b8" /><circle cx="10.700" cy="10.500" r="1.900" fill="#1762b8" /></>,
  <><rect width="16" height="16" fill="#fff" /><path d="M2 8q2-3 6-2l5 1v2H7q-3 2-5-1z" fill="#a42a22" /><path d="M8 7h6v1.500H8z" fill="#333" /></>,
];

function StartButton() {
  return (
    <button type="button" aria-label="Start" className="mt-2 ml-[9px] h-[44px] w-[44px] shrink-0">
      <svg width="44" height="44" viewBox="0 0 44 44">
        <defs>
          <radialGradient id="orb" cx="50%" cy="85%" r="80%">
            <stop offset="0" stopColor="#36d0f4" />
            <stop offset=".45" stopColor="#17689a" />
            <stop offset="1" stopColor="#5c7c8e" />
          </radialGradient>
        </defs>
        <circle cx="22" cy="22" r="20.500" fill="url(#orb)" stroke="#0d2c3c" strokeWidth="1.500" />
        <path d="M4 19a18 18 0 0136 0q-18 6-36 0z" fill="#fff" opacity=".35" />
        <path d="M13 13q4-3 9-.5l-2 9q-5-2.500-9 0z" fill="#e8532a" />
        <path d="M23.500 13q4 2.500 9 0l-2 9q-5 2-9 0z" fill="#86bd2e" />
        <path d="M10.500 23.500q4-2.500 9 0l-2 8.500q-5-2-9 0z" fill="#3d8fe0" />
        <path d="M21 24q4 2.500 9 0l-2 8.500q-4.500 2.500-9 0z" fill="#f8c62c" />
      </svg>
    </button>
  );
}

type TaskButtonProps = { icon: ReactNode; label: string; active?: boolean };

function TaskButton({ icon, label, active = false }: TaskButtonProps) {
  return (
    <button
      type="button"
      className={clsx(
        'flex h-[27px] w-[157px] items-center gap-1 rounded-[3px] border border-[#75797e] pl-2 whitespace-nowrap text-white',
        active ? 'bg-gradient-to-b from-[#2b2b2c] to-[#050608]' : 'bg-[linear-gradient(#85878a,#4c4f52_45%,#15191d_50%,#0f1317)]',
      )}
    >
      {icon}
      {label}
    </button>
  );
}

function Taskbar() {
  return (
    <footer className="flex h-[60px] shrink-0 bg-[linear-gradient(#4a4b4d_0_1px,#8d8f91_1px,#55585a_14px,#0a0d11_15px,#04070c)] text-white">
      <StartButton />
      <div className="ml-3 grid h-[60px] grid-cols-[repeat(15,23px)] grid-rows-[30px_30px] place-items-start pt-[7px]">
        {QUICK_LAUNCH.map((art, i) => (
          <button key={i} type="button" aria-label={`Quick launch ${i + 1}`}>
            <Icon>{art}</Icon>
          </button>
        ))}
      </div>
      <div className="ml-[19px] flex gap-[3px] pt-[2px]">
        <TaskButton icon={<ChromeIcon />} label="Forum -> Svarer i h..." />
        <TaskButton icon={<ITunesIcon />} label="iTunes" />
        <TaskButton icon={<ComputerIcon />} label="Computer Manage..." active />
      </div>
      <span className="mt-[7px] mr-[13px] ml-auto font-['Liberation_Sans',sans-serif] text-[12px]">NO</span>
      <div className="mt-[5px] flex w-[31px] flex-col items-end gap-[2px]">
        <MuIcon />
        <div className="flex items-center gap-[6px]">
          <button type="button" aria-label="Show hidden icons">
            <svg width="8" height="8" viewBox="0 0 8 8"><path d="M6.500.5L2 4l4.500 3.500" stroke="#fff" strokeWidth="1.700" fill="none" /></svg>
          </button>
          <ITunesIcon />
        </div>
      </div>
      <div className="mt-[5px] ml-[12px] flex flex-col gap-[2px]">
        <Icon><path d="M2 3v4q0 2 2.500 2V14M7 3v4q0 2-2.500 2M3 1v3M6 1v3" stroke="#fff" strokeWidth="1.700" fill="none" /><path d="M1.500 5h6v3l-3 2-3-2z" fill="#fff" /><rect x="8.500" y="3" width="6" height="12" fill="#9ad69a" stroke="#fff" strokeWidth="1.300" /><path d="M10 1.500h3" stroke="#fff" strokeWidth="2" /></Icon>
        <Icon><rect x="4.500" y="1.500" width="10" height="8" fill="#2463b4" stroke="#dfe8f2" /><rect x="1.500" y="5.500" width="9" height="7" fill="#1c4f9c" stroke="#dfe8f2" /><path d="M3 14.500h6" stroke="#dfe8f2" strokeWidth="1.500" /><circle cx="12" cy="11.500" r="3.500" fill="#35a0dc" /><path d="M10 11q2-3 4-1l-2 4z" fill="#54b548" /></Icon>
        <Icon><path d="M1 6h2.500L7 2.500v11L3.500 10H1z" fill="#fff" /><path d="M9.500 5q2.500 3 0 6" stroke="#fff" strokeWidth="1.400" fill="none" /></Icon>
      </div>
      <div className="mr-[11px] ml-[3px] flex w-[60px] flex-col items-center text-center leading-[22px] whitespace-nowrap">
        <time className="-mt-[3px]">17:56</time>
        <span>mandag</span>
        <span>16.03.2009</span>
      </div>
    </footer>
  );
}

export default function App() {
  return (
    <div className="relative flex h-screen flex-col overflow-hidden font-['Noto_Sans',sans-serif] text-[11px] leading-[15px] text-black">
      <BrowserTabs />
      <BrowserToolbar />
      <ForumPage />
      <Taskbar />
      <ManagementWindow />
    </div>
  );
}
